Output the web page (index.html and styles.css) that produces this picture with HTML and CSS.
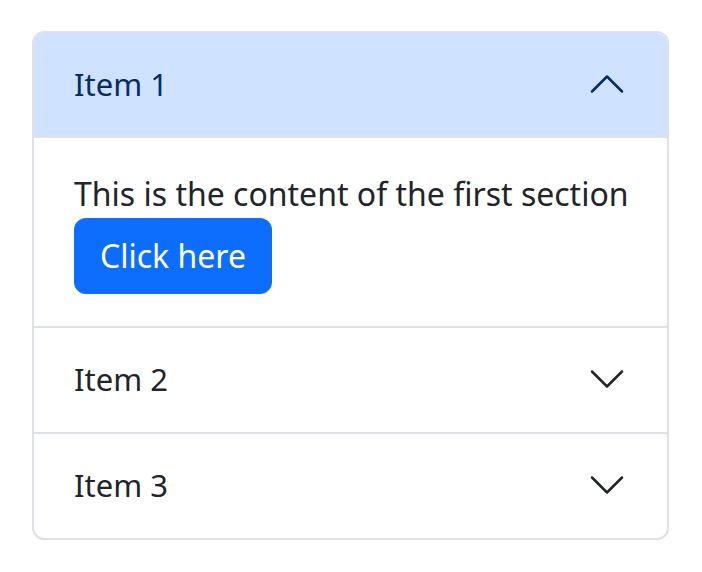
FILE: index.html
```html
<!DOCTYPE html>
<html lang="en">
<head>
<meta charset="utf-8">
<title>Accordion</title>
<link rel="stylesheet" href="styles.css">
</head>
<body>
<div class="page">
  <div class="accordion">
    <div class="item">
      <div class="header active">
        <span class="title">Item 1</span>
        <svg class="chev up" viewBox="0 0 16 16" fill="none" stroke-linecap="round" stroke-linejoin="round"><path d="M2 5L8 11L14 5"/></svg>
      </div>
      <div class="body">
        <p class="text">This is the content of the first section</p>
        <button class="btn">Click here</button>
      </div>
    </div>
    <div class="item">
      <div class="header">
        <span class="title">Item 2</span>
        <svg class="chev" viewBox="0 0 16 16" fill="none" stroke-linecap="round" stroke-linejoin="round"><path d="M2 5L8 11L14 5"/></svg>
      </div>
    </div>
    <div class="item last">
      <div class="header">
        <span class="title">Item 3</span>
        <svg class="chev" viewBox="0 0 16 16" fill="none" stroke-linecap="round" stroke-linejoin="round"><path d="M2 5L8 11L14 5"/></svg>
      </div>
    </div>
  </div>
</div>
</body>
</html>
```
FILE: styles.css
```css
* { box-sizing: border-box; }
html, body { margin: 0; padding: 0; background: #fff; }
body {
  font-family: "Noto Sans", "Open Sans", sans-serif;
  font-size: 32px;
  line-height: 48px;
  color: #212529;
}
.page {
  padding: 31px 0 0 32px;
}
.accordion {
  width: 637px;
  border: 2px solid #dee2e6;
  border-radius: 12px;
  overflow: hidden;
  background: #fff;
}
.item {
  border-bottom: 2px solid #dee2e6;
}
.item.last { border-bottom: none; }
.header {
  display: flex;
  align-items: center;
  justify-content: space-between;
  height: 104px;
  padding: 0 40px 2px;
  color: #212529;
}
.title {
  font-size: 31px;
}
.header.active {
  height: 105px;
  background: #cfe2ff;
  color: #052c65;
  border-bottom: 2px solid #dee2e6;
}
.chev {
  width: 40px;
  height: 40px;
  stroke: #212529;
  stroke-width: 1;
  flex: none;
}
.chev.up {
  transform: rotate(180deg);
  stroke: #052c65;
}
.body {
  padding: 32px 40px;
}
.text {
  margin: 0;
  white-space: nowrap;
}
.btn {
  display: inline-block;
  font-family: inherit;
  font-size: 32px;
  line-height: 48px;
  color: #fff;
  background: #0d6efd;
  border: 2px solid #0d6efd;
  border-radius: 12px;
  padding: 12px 24px;
  margin: 0;
  vertical-align: top;
}
```
